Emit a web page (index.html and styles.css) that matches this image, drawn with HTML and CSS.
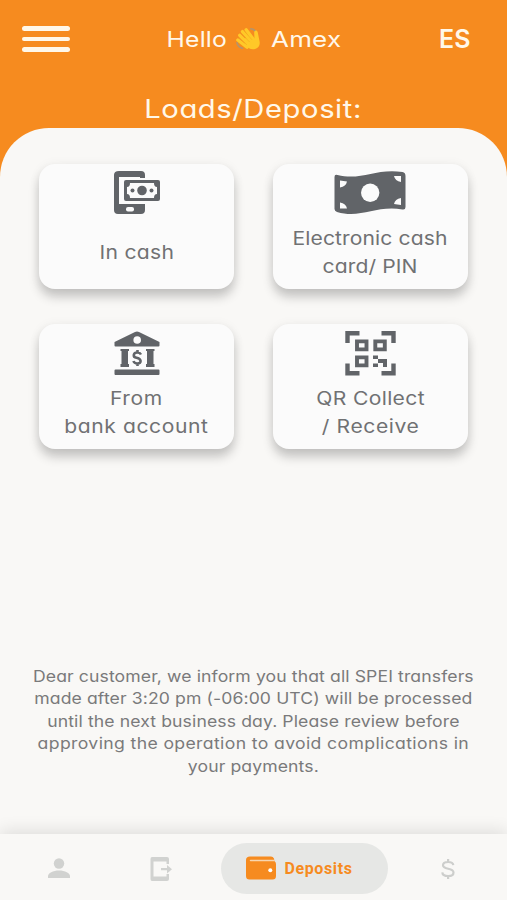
FILE: index.html
```html
<!DOCTYPE html>
<html lang="en">
<head>
    <meta charset="UTF-8">
    <meta name="viewport" content="width=device-width, initial-scale=1.0">
    <title>Loads/Deposit</title>
    <link rel="stylesheet" href="styles.css">
</head>
<body>
    <header>
        <div class="top-bar">
            <button class="menu-button" aria-label="Menu">
                <span></span>
                <span></span>
                <span></span>
            </button>
            <div class="greeting">
                <span class="hello">Hello</span>
                <svg class="wave" viewBox="0 0 28 26" aria-hidden="true">
                    <path d="M17 2q5 0 6 6M2 17q1 5 6 6" fill="none" stroke="#b5946c" stroke-width="1.800" stroke-linecap="round"/>
                    <path d="M5 9l11 11M8 5l11 12M12 3l9 12M3 14l10 8" stroke="#ffc928" stroke-width="3.600" stroke-linecap="round"/>
                    <path d="M10 12l11 1l-.3-7c0-3 3.300-3 3.800-.5l2 10c1 5-2 8-6 8.500c-4 .4-6-1-9-4z" fill="#ffc928"/>
                    <path d="M6.500 7l9 9M10 4.500l8 9M4.500 12l8 7" stroke="#f0a81c" stroke-width=".6" stroke-linecap="round"/>
                </svg>
                <span class="name">Amex</span>
            </div>
            <div class="lang">ES</div>
        </div>
        <h1>Loads/Deposit:</h1>
    </header>

    <main>
        <div class="cards">
            <div class="card single">
                <svg width="48" height="46" viewBox="0 0 48 46">
                    <path d="M6 1h22q4 0 4 4v3h-5V7H6v27h26v6q0 4-4 4H5q-4 0-4-4V5q0-4 5-4z" fill="#616468"/>
                    <rect x="13" y="37" width="8" height="4.500" rx="2" fill="#fbfbfb"/>
                    <rect x="9" y="8" width="39" height="25" fill="#fbfbfb"/>
                    <rect x="11" y="10" width="36" height="21" rx="2" fill="#616468"/>
                    <path d="M17 13h24q0 4 3 4v7q-3 0-3 4H17q0-4-3-4v-7q3 0 3-4z" fill="#fbfbfb"/>
                    <circle cx="29" cy="20.500" r="4.800" fill="#616468"/>
                    <circle cx="19.500" cy="20.500" r="2" fill="#616468"/>
                    <circle cx="38.500" cy="20.500" r="2" fill="#616468"/>
                </svg>
                <p><span class="wide-1">In cash</span></p>
            </div>
            <div class="card bill">
                <svg width="72" height="46" viewBox="0 0 72 46">
                    <path d="M.500 7q0-3 3-2c24 6 38-7 65-3q3 .5 3 4v31q0 3-3 2.500C42 35 27 49 3 42q-2.500-1-2.500-3z" fill="#616468"/>
                    <circle cx="36.200" cy="22.800" r="9.200" fill="#fbfbfb"/>
                    <path d="M6 10.500l7 1q-1 5-7 6zM6 38.500l7 0q-1-5-7-6zM67 6l-7 0q1 5 7 6zM67 35l-7-1q1-5 7-6z" fill="#fbfbfb"/>
                </svg>
                <p><span>Electronic cash</span><span>card/ PIN</span></p>
            </div>
            <div class="card">
                <svg width="46" height="46" viewBox="0 0 46 46">
                    <path d="M.500 12L21 2q2-1 4 0l20.500 10v3.500q0 1-1 1h-43q-1 0-1-1zM1.500 39.500h43q1 0 1 1V44q0 1-1 1h-43q-1 0-1-1v-3.500q0-1 1-1z" fill="#616468"/>
                    <circle cx="23.200" cy="10" r="3.800" fill="#fbfbfb"/>
                    <path d="M6.500 19H15v2h-1v13h1v3H6.500v-3h1V21h-1zM32 19h8.500v2h-1v13h1v3H32v-3h1V21h-1z" fill="#616468"/>
                    <path d="M27 24.500c-.8-1.500-2-2-3.500-2c-4.500 0-5 4.500-1 5.200c5 .9 5.500 5.800 1 5.800c-2 0-3.500-.7-4-2.500M23.500 20v3M23.500 33v3" fill="none" stroke="#616468" stroke-width="2.600"/>
                </svg>
                <p><span class="wide-2">From</span><span class="wide-2">bank account</span></p>
            </div>
            <div class="card">
                <svg width="51" height="46" viewBox="0 0 51 46">
                    <path d="M2.500 13V3.300H14.500M36.500 3.300H48.500V13M2.500 33.500V43.200H14.500M36.500 43.200H48.500V33.500" fill="none" stroke="#616468" stroke-width="4.400"/>
                    <path d="M12 11.400h9.500v8H12zM30.300 11.400h9.500v8h-9.500zM12 27.400h9.500v8H12z" fill="none" stroke="#616468" stroke-width="3.900"/>
                    <path d="M28 25.500h5V29h-5zM33 29h9v8h-4v-4h-5zM28 33.500h5V37h-5z" fill="#616468"/>
                </svg>
                <p><span class="wide-1">QR Collect</span><span class="wide-2">/ Receive</span></p>
            </div>
        </div>

        <p class="notice">
            <span>Dear customer, we inform you that all SPEI transfers</span>
            <span>made after 3:20 pm (-06:00 UTC) will be processed</span>
            <span>until the next business day. Please review before</span>
            <span class="wide-1">approving the operation to avoid complications in</span>
            <span>your payments.</span>
        </p>
    </main>

    <nav>
        <a class="nav-item profile">
            <svg width="22" height="21" viewBox="0 0 22 21" fill="#d1d2d0">
                <circle cx="11" cy="5.500" r="5.200"/>
                <path d="M0 20v-2c0-3 5-5.500 11-5.500s11 2.500 11 5.500v2z"/>
            </svg>
        </a>
        <a class="nav-item send">
            <svg width="22" height="26" viewBox="0 0 22 26" fill="#d1d2d0">
                <path d="M2 1h15q2 0 2 2v5h-2.500V5.500h-13v15h13V18H19v5q0 2-2 2H2q-1.500 0-1.500-2V3Q.5 1 2 1z"/>
                <path d="M11 12h6V9l5 4.200l-5 4.200v-3.200h-6z"/>
            </svg>
        </a>
        <a class="nav-item active">
            <svg width="30" height="24" viewBox="0 0 30 24">
                <path d="M4 .5h21q2 0 3 2l.3 2.500q1.700 1 1.700 3v12q0 3.500-3.500 3.500h-23Q0 23.500 0 20V4Q0 .5 4 .5z" fill="#f68b1f"/>
                <path d="M4.500 4.500H28" stroke="#f8d6ae" stroke-width="1.500" stroke-linecap="round"/>
                <circle cx="24.300" cy="14.300" r="2" fill="#fff"/>
            </svg>
            <span>Deposits</span>
        </a>
        <a class="nav-item money">
            <svg width="14" height="20" viewBox="0 0 14 20">
                <path d="M12.300 6.200C12 4 10 3 7.200 3C4 3 2 4.200 2 6.300C2 11 12.500 8.500 12.500 13.400C12.500 15.800 10.300 17 7.200 17C4 17 1.500 15.800 1.300 13.300M7.100 0v3M7.100 17v3" fill="none" stroke="#cdcecc" stroke-width="2.200"/>
            </svg>
        </a>
    </nav>
</body>
</html>
```
FILE: styles.css
```css
* {
    box-sizing: border-box;
}
body {
    font-family: 'Inter', sans-serif;
    font-feature-settings: "cv11";
    margin: 0;
    height: 900px;
    background-color: #f68b1f;
    color: #707173;
    display: flex;
    flex-direction: column;
    overflow: hidden;
}
header {
    height: 128px;
    color: #fff8ea;
}
.top-bar {
    display: grid;
    grid-template-columns: 141px 1fr 145px;
    align-items: center;
    height: 78px;
}
.menu-button {
    display: flex;
    flex-direction: column;
    gap: 6px;
    width: 48px;
    margin-left: 22px;
    padding: 0;
    border: none;
    background: none;
}
.menu-button span {
    height: 4.600px;
    border-radius: 3px;
    background-color: #fff8ea;
}
.greeting {
    display: flex;
    align-items: center;
    justify-content: center;
    font-size: 22px;
    letter-spacing: 0.200px;
}
.hello {
    transform: scaleX(1.12);
    transform-origin: right;
}
.name {
    transform: scaleX(1.180);
    transform-origin: left;
}
.wave {
    width: 26px;
    height: 24px;
    margin: 0 10px 0 8px;
}
.lang {
    font-size: 25px;
    font-weight: 600;
    margin-left: 77px;
}
h1 {
    width: fit-content;
    margin: 15px auto 0;
    font-size: 25.500px;
    font-weight: 400;
    line-height: 32px;
    letter-spacing: 0.500px;
    transform: scaleX(1.145);
}
main {
    flex: 1;
    display: flex;
    flex-direction: column;
    background-color: #f9f8f6;
    border-radius: 49px 49px 0 0;
    padding: 36px 39px 0;
}
.cards {
    display: grid;
    grid-template-columns: 195px 195px;
    gap: 35px 39px;
}
.card {
    height: 125px;
    padding-top: 6px;
    display: flex;
    flex-direction: column;
    align-items: center;
    background-color: #fbfbfb;
    border-radius: 16px;
    box-shadow: 0 8px 11px rgba(0, 0, 0, 0.2), 0 1px 12px rgba(0, 0, 0, 0.06);
}
.card.bill svg {
    margin-right: 2px;
}
.card p {
    margin: 8px 0 0;
    display: flex;
    flex-direction: column;
    align-items: center;
    font-size: 18.500px;
    line-height: 28px;
    letter-spacing: 0.100px;
    white-space: nowrap;
    transform: scaleX(1.14);
}
.card .wide-1 {
    letter-spacing: 0.300px;
}
.card .wide-2 {
    letter-spacing: 0.520px;
}
.card.single p {
    margin-top: 22px;
}
.notice {
    align-self: center;
    margin: auto 0 57px;
    display: flex;
    flex-direction: column;
    align-items: center;
    color: #7a7a7b;
    font-size: 16px;
    line-height: 22.400px;
    letter-spacing: 0.100px;
    white-space: nowrap;
    transform: scaleX(1.1);
}
.notice .wide-1 {
    letter-spacing: 0.340px;
}
nav {
    height: 66px;
    display: grid;
    grid-template-columns: 117px 87px 200px 88px;
    align-items: center;
    background-color: #f9f8f6;
    box-shadow: 0 -3px 16px rgba(0, 0, 0, 0.11);
}
.nav-item {
    display: flex;
    align-items: center;
    justify-content: center;
}
.nav-item.profile {
    padding-top: 3px;
}
.nav-item.send {
    padding-top: 4px;
}
.nav-item.money {
    padding-top: 4px;
}
.nav-item.active {
    width: 167px;
    height: 51px;
    margin: 2px 0 0 17px;
    gap: 9px;
    border-radius: 26px;
    background-color: #e6e7e5;
    color: #f68b1f;
    font-family: 'Roboto', sans-serif;
    font-size: 16px;
    font-weight: 700;
    letter-spacing: 0.600px;
    padding-right: 11px;
}
```
